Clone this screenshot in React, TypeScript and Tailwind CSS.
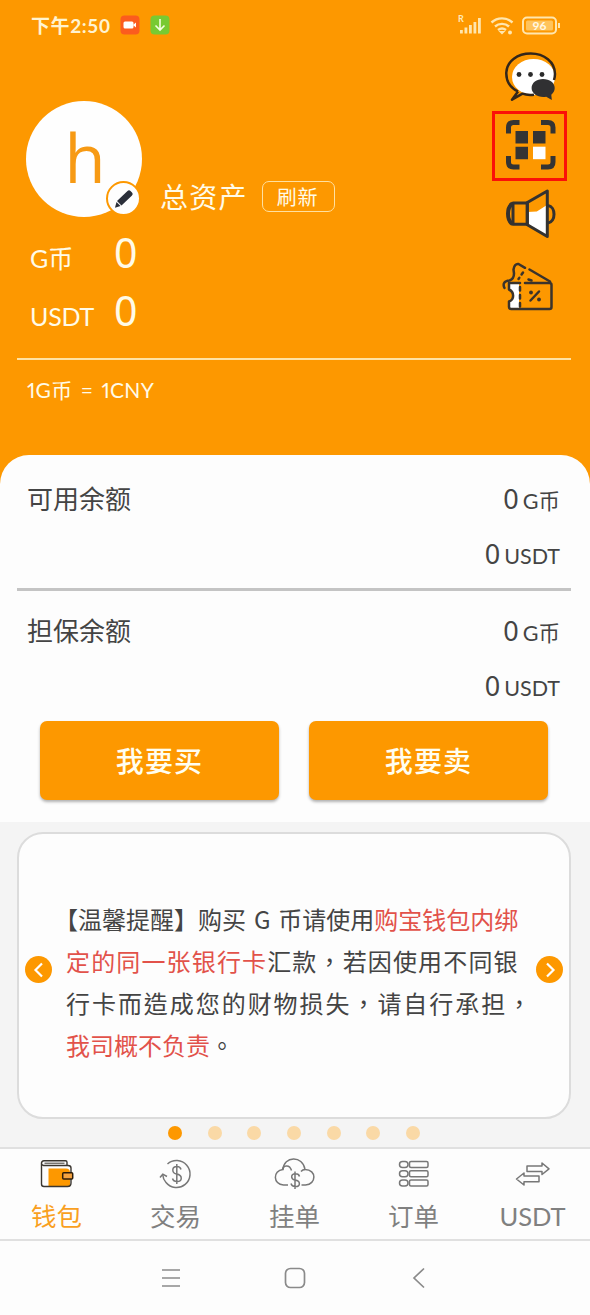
import React from "react";

const NAV_ITEMS = [
  { label: "钱包", icon: <WalletIcon />, active: true },
  { label: "交易", icon: <TradeIcon />, active: false },
  { label: "挂单", icon: <CloudIcon />, active: false },
  { label: "订单", icon: <OrderIcon />, active: false },
  { label: "USDT", icon: <TransferIcon />, active: false },
];

const BALANCES = [
  { name: "可用余额", coin: "0", usdt: "0" },
  { name: "担保余额", coin: "0", usdt: "0" },
];

const SLIDES = [0, 1, 2, 3, 4, 5, 6];

function StatusBar() {
  return (
    <div className="flex h-[50px] items-center justify-between pl-[31px] pr-[28px] text-[#fff3d0]">
      <div className="flex items-center">
        <span className="w-[89px] whitespace-nowrap text-[19px] font-bold leading-none tracking-[0.6px]">
          下午2:50
        </span>
        <svg width="52" height="20" viewBox="0 0 52 20">
          <rect x="0.5" y="0.5" width="19" height="19" rx="4" fill="#fb5c1e" />
          <rect x="3.5" y="6.5" width="10" height="7" rx="1.5" fill="#fff" />
          <path d="M13 10l3-2.5v5z" fill="#fff" />
          <rect x="30.5" y="0.5" width="19" height="19" rx="4" fill="#78ca32" />
          <path d="M40 4v11M35.500 10.500l4.500 4.500 4.500-4.500" fill="none" stroke="#f4ffe0" strokeWidth="1.600" />
        </svg>
      </div>
      <svg width="104" height="22" viewBox="0 0 104 22">
        <text x="0" y="8" fontSize="9" fontWeight="bold" fill="#ffe9b8" fontFamily="Lato">R</text>
        <g fill="#ffe6ae">
          <rect x="2" y="16" width="2.800" height="3.500" />
          <rect x="6.500" y="13.500" width="2.800" height="6" />
          <rect x="11" y="11" width="2.800" height="8.500" />
          <rect x="15.500" y="8" width="2.800" height="11.500" />
          <rect x="20" y="4" width="2.800" height="15.500" />
        </g>
        <g fill="none" stroke="#ffe6ae" strokeWidth="2.400">
          <path d="M33.500 8.500c6-5.500 15-5.500 21 0" />
          <path d="M37 12.500c4-3.500 10-3.500 14 0" />
          <path d="M40 16c2.500-2 5.500-2 8 0" />
        </g>
        <path d="M40.500 17h7l-3.500 3.500z" fill="#ffe6ae" />
        <circle cx="52" cy="18.500" r="2" fill="#ffe6ae" />
        <rect x="65" y="3.500" width="33" height="16" rx="4" fill="none" stroke="#ffe6ae" strokeWidth="2" />
        <rect x="68" y="6.500" width="27" height="10" rx="1.500" fill="#ffc45c" />
        <path d="M101 9v5" stroke="#ffe6ae" strokeWidth="2" />
        <text x="81.500" y="15.500" textAnchor="middle" fontSize="12" fontWeight="bold" fill="#fff8e4" fontFamily="Lato">96</text>
      </svg>
    </div>
  );
}

function ChatIcon() {
  return (
    <svg width="75" height="61" viewBox="0 0 75 61">
      <ellipse cx="41.500" cy="27" rx="21.500" ry="18" fill="#fff" />
      <path
        d="M26 41.500C18 37.500 14 30.500 14.300 22.500 15 11 25.500 3.500 38.700 3.500c13.500 0 24.300 8.500 24.300 20.500 0 2.500-.4 4-1 6M26 41.500l-6 8.200 10.500-6c3.500 1.300 7 1.500 11.500 1"
        fill="none"
        stroke="#33261a"
        strokeWidth="2.500"
        strokeLinejoin="round"
      />
      <g fill="#2b2b2b">
        <circle cx="27" cy="24.500" r="2.400" />
        <circle cx="38.500" cy="24.500" r="2.400" />
        <circle cx="50" cy="24.500" r="2.400" />
      </g>
      <path
        d="M51 29c6.600 0 11.700 3.800 11.700 9 0 2.800-1.300 5-3.400 6.700l.5 5.200-5.600-3.200c-7.500 1.400-14.600-2.700-14.600-8.700 0-5.200 5-9 11.400-9z"
        fill="#303032"
      />
    </svg>
  );
}

function ScanIcon() {
  return (
    <svg width="69" height="64" viewBox="3 3 69 64">
      <path
        d="M16.500 22.500V16.500q0-5 5-5h6M49 11.500h7q5 0 5 5v6M61 45v6q0 5-5 5h-7M27.500 56h-6q-5 0-5-5v-6"
        fill="none"
        stroke="#343434"
        strokeWidth="5"
      />
      <path d="M23.500 20h12.500v12.500H23.500zM41 20h12.500v12.500H41zM23.500 35.700h12.500v12.500H23.500z" fill="#343434" />
      <path d="M41 35.700h12.500v12.500H41z" fill="#fff" />
    </svg>
  );
}

function MegaphoneIcon() {
  return (
    <svg width="75" height="64" viewBox="0 0 75 64">
      <path d="M35.300 31l9.500-.5L55 24v31L35.300 43z" fill="#fff" />
      <g fill="none" stroke="#343230" strokeWidth="3" strokeLinejoin="round">
        <path d="M21 22h14.300v21.200H21z" />
        <path d="M35.300 21.500L55.300 10v45.500L35.300 43.700z" />
        <path d="M20.500 22.500c-6 4-6 16.500 0 20.500" strokeWidth="4" />
        <path d="M56 24.500c8 1 8 16.500 0 17.500" />
      </g>
    </svg>
  );
}

function TicketIcon() {
  return (
    <svg width="75" height="80" viewBox="0 0 75 80">
      <path d="M17 38h10v26H17v-7.500c5.500-2 5.500-9.500 0-12z" fill="#fff" />
      <g fill="none" stroke="#3a332c" strokeWidth="2.500" strokeLinejoin="round" strokeLinecap="round">
        <path d="M28 38H17v6.500c5.500 2.500 5.500 10 0 12V62q0 2 2 2h38.500q2 0 2-2V40q0-2-2-2H33" />
        <path d="M12.500 43c-2-4-.5-7 5-7.500 3-1 4.500-3.500 4.500-7l-.5-4c.5-4 2.500-6 5-5.500l6.500 3.800M37.500 24.500L58 36.500" />
        <path d="M28 42v21" strokeDasharray="3.500 4.500" />
        <path d="M31 27.500l-4.500 6.500" strokeDasharray="2.500 4" />
        <path d="M36.500 34.500l3 1" />
        <path d="M47 46.500l-8.500 9" />
      </g>
      <circle cx="39" cy="47.500" r="1.900" fill="#3a332c" />
      <circle cx="47" cy="54.500" r="1.900" fill="#3a332c" />
    </svg>
  );
}

function PencilIcon() {
  return (
    <svg width="22" height="22" viewBox="0 0 22 22">
      <path d="M14.500 3q1.500-1.500 3 0l1.500 1.500q1.500 1.500 0 3L8.500 17.500 4 13z" fill="#2b2f3a" />
      <path d="M3.500 14l4 4-5.500 1.800z" fill="#2b2f3a" />
    </svg>
  );
}

function WalletIcon() {
  return (
    <svg width="34" height="28" viewBox="0 0 34 28">
      <path d="M8.500 8.500H26q4 0 4 4v14H8.500z" fill="#fd9800" />
      <g fill="none" stroke="#3b3630" strokeWidth="1.400">
        <path d="M1.500 2.500V24q0 2.500 2.500 2.500h23.500q3.500 0 3.500-3.500V8q0-2.500-3-2.500H3.500q-2-.3-2-2 0-2.800 2.500-2.800h21.500q1.500 0 1.500 1.500v3" />
        <path d="M4.500 3.200h20" strokeWidth="1" />
      </g>
      <rect x="22.700" y="12.700" width="10" height="6.300" rx="1" fill="#f5a340" stroke="#2e1d08" strokeWidth="1.500" />
    </svg>
  );
}

function TradeIcon() {
  return (
    <svg width="34" height="32" viewBox="0 0 34 32">
      <g fill="none" stroke="#777" strokeWidth="1.500">
        <path d="M8.500 6A13.500 13.500 0 1 1 7 24.500C5 22.500 4 20 3.800 17" />
        <path d="M1 19.500l2.800-3.300L8 18.500" />
        <path d="M22 11.500c-.5-2-2-3-4-3-5.500 0-5.500 6.500-.5 7.500 6.500 1 6 7.500.5 7.500-2.500 0-4-1-4.500-3M17.800 6v20" />
      </g>
    </svg>
  );
}

function CloudIcon() {
  return (
    <svg width="42" height="32" viewBox="0 0 42 32">
      <g fill="none" stroke="#777" strokeWidth="1.500">
        <path d="M14 27H9.500C-1 26.500-1.500 12.500 9 11.500 9.500-2 29-3 31 11.500c12 0 11.500 15 .5 15.500h-4" />
        <path d="M8.500 12c0-4.500 7-6.500 9 .5" />
        <path d="M31 11.500c-2 0-3 .8-4 2" />
        <path d="M25.500 18.500c-.5-2-2-2.700-4-2.700-5 0-5 5.400-.5 6.200 6 1 5.500 6.500.5 6.500-2.500 0-4-1-4.500-3M21 13.500v17.500" />
      </g>
    </svg>
  );
}

function OrderIcon() {
  return (
    <svg width="32" height="28" viewBox="0 0 32 28">
      <g fill="none" stroke="#777" strokeWidth="1.500">
        <rect x="1.500" y="1.500" width="8.500" height="6" rx="3" />
        <rect x="11.500" y="1.500" width="18.500" height="6" rx="1.500" />
        <rect x="1.500" y="10.800" width="8.500" height="6" rx="3" />
        <rect x="11.500" y="10.800" width="18.500" height="6" rx="1.500" />
        <rect x="1.500" y="20.100" width="8.500" height="6" rx="3" />
        <rect x="11.500" y="20.100" width="18.500" height="6" rx="1.500" />
      </g>
    </svg>
  );
}

function TransferIcon() {
  return (
    <svg width="36" height="26" viewBox="0 0 36 26">
      <g fill="none" stroke="#777" strokeWidth="1.500" strokeLinejoin="round">
        <path d="M12 5h15V2L34 7.800l-7 5.700V10.500H12z" />
        <path d="M24 15H9v-3l-7.500 6L9 24v-3.300h15z" />
      </g>
    </svg>
  );
}

function WalletHeader() {
  return (
    <header className="h-[490px] bg-[#fd9800] text-[#fffbe8]">
      <StatusBar />
      <div className="flex h-[308px] justify-between pl-[26px] pr-[23px]">
        <div className="pt-[51px]">
          <div className="flex items-end">
            <div className="relative flex h-[116px] w-[116px] items-center justify-center rounded-full bg-[#fefefe]">
              <span className="pb-[4px] pl-[2px] font-['Open_Sans',sans-serif] text-[67px] leading-none text-[#f79a14]">h</span>
              <span className="absolute right-[1px] bottom-[1px] flex h-[35px] w-[35px] items-center justify-center rounded-full border-2 border-[#fd9800] bg-[#fefefe]">
                <PencilIcon />
              </span>
            </div>
            <div className="ml-[18px] h-[40px] w-[102px] text-[28px] leading-[40px] tracking-[1.200px]">总资产</div>
            <button className="mb-[5px] h-[31px] w-[73px] rounded-[7px] border border-[#ffe0a0] pr-[2px] text-[20px] leading-[30px] tracking-[0.8px]">
              刷新
            </button>
          </div>
          <div className="mt-[6px] flex h-[58px] items-baseline pl-[4px]">
            <span className="w-[84px] text-[25px]">G币</span>
            <span className="font-['Noto_Sans',sans-serif] text-[41px] leading-[58px]">0</span>
          </div>
          <div className="flex h-[58px] items-baseline pl-[4px]">
            <span className="w-[84px] text-[25px] tracking-[-0.2px]">USDT</span>
            <span className="font-['Noto_Sans',sans-serif] text-[41px] leading-[58px]">0</span>
          </div>
        </div>
        <div className="flex w-[75px] flex-col">
          <ChatIcon />
          <div className="h-[70px] border-3 border-[#fb1008]">
            <ScanIcon />
          </div>
          <MegaphoneIcon />
          <TicketIcon />
        </div>
      </div>
      <div className="ml-[17px] mr-[19px] h-[2px] bg-[#ffe2a3]" />
      <p className="px-[27px] pt-[15px] text-[21px] leading-[30px] proportional-nums tracking-[0.3px] [word-spacing:2.500px]">
        1G币 = 1CNY
      </p>
    </header>
  );
}

function NoticeCard() {
  return (
    <section className="h-[325px] bg-[#f4f4f4] pl-[17px] pr-[19px] pt-[10px]">
      <div className="flex h-[287px] items-center justify-between rounded-[26px] border-2 border-[#dcdcdc] bg-[#fdfdfd] px-[6px]">
        <button className="mt-[-12px] flex h-[27px] w-[27px] shrink-0 items-center justify-center rounded-full bg-[#fd9800]">
          <svg width="12" height="18" viewBox="0 0 12 18">
            <path d="M9 2.500L2.500 9 9 15.500" fill="none" stroke="#fff" strokeWidth="2.200" />
          </svg>
        </button>
        <div className="ml-[1px] mt-[26px] h-[182px] w-[457px] whitespace-nowrap font-['Noto_Sans_CJK_TC',sans-serif] text-[24px] leading-[42px] text-[#444]">
          <p className="-ml-[12px] [word-spacing:2.500px]">
            【温馨提醒】购买 G 币请使用<span className="text-[#e2524a]">购宝钱包内绑</span>
          </p>
          <p className="tracking-[1.150px]">
            <span className="text-[#e2524a]">定的同一张银行卡</span>汇款，若因使用不同银
          </p>
          <p className="tracking-[1.950px]">行卡而造成您的财物损失，请自行承担，</p>
          <p>
            <span className="text-[#e2524a]">我司概不负责</span>。
          </p>
        </div>
        <button className="mt-[-12px] flex h-[27px] w-[27px] shrink-0 items-center justify-center rounded-full bg-[#fd9800]">
          <svg width="12" height="18" viewBox="0 0 12 18">
            <path d="M3 2.500L9.500 9 3 15.500" fill="none" stroke="#fff" strokeWidth="2.200" />
          </svg>
        </button>
      </div>
      <div className="flex justify-center gap-[25.700px] pt-[7px]">
        {SLIDES.map((slide) => (
          <span
            key={slide}
            className={
              slide === 0
                ? "h-[14px] w-[14px] rounded-full bg-[#fd9800]"
                : "h-[14px] w-[14px] rounded-full bg-[#fad9a6]"
            }
          />
        ))}
      </div>
    </section>
  );
}

const App: React.FC = () => {
  return (
    <div className="h-[1315px] w-[590px] overflow-hidden bg-[#fdfdfd] font-['Lato','Noto_Sans_CJK_TC',sans-serif]">
      <WalletHeader />

      <main className="relative -mt-[35px] h-[367px] rounded-t-[29px] bg-[#fdfdfd] pl-[17px] pr-[19px] text-[#444]">
        {BALANCES.map((balance, index) => (
          <div
            key={balance.name}
            className={
              index === 0
                ? "h-[136px] border-b-3 border-[#c4c4c4] pl-[10px] pr-[11px] pt-[16px]"
                : "h-[130px] pl-[10px] pr-[11px] pt-[12px]"
            }
          >
            <div className="flex h-[55px] items-baseline justify-between leading-[54px]">
              <span className="font-['Noto_Sans_CJK_SC',sans-serif] text-[26px]">{balance.name}</span>
              <span className="text-[21.500px]">
                <span className="mr-[4px] font-['Noto_Sans',sans-serif] text-[27px]">{balance.coin}</span>G币
              </span>
            </div>
            <div className="text-right text-[21.500px] leading-[55px]">
              <span className="mr-[4px] font-['Noto_Sans',sans-serif] text-[27px]">{balance.usdt}</span>USDT
            </div>
          </div>
        ))}
        <div className="flex gap-[30px] px-[23px]">
          <button className="h-[79px] w-[239px] shrink-0 rounded-[7px] bg-[#fd9800] text-[28px] font-medium tracking-[1.200px] text-[#fffef0] shadow-[0_2px_3px_rgba(0,0,0,0.3)]">
            我要买
          </button>
          <button className="h-[79px] w-[239px] shrink-0 rounded-[7px] bg-[#fd9800] text-[28px] font-medium tracking-[1.200px] text-[#fffef0] shadow-[0_2px_3px_rgba(0,0,0,0.3)]">
            我要卖
          </button>
        </div>
      </main>

      <NoticeCard />

      <nav className="h-[94px] border-y-2 border-[#e0e0e0]">
        <div className="-ml-[3px] flex w-[595px]">
          {NAV_ITEMS.map((item) => (
            <div key={item.label} className="flex w-[119px] flex-col items-center">
              <span className="flex h-[49px] items-center">{item.icon}</span>
              <span
                className={
                  item.active
                    ? "text-[25.500px] leading-[36px] text-[#f9a01f]"
                    : "text-[25.500px] leading-[36px] text-[#808080]"
                }
              >
                {item.label}
              </span>
            </div>
          ))}
        </div>
      </nav>

      {/* android system buttons */}
      <footer className="flex h-[74px] items-center justify-center gap-[103px]">
        <svg width="20" height="20" viewBox="0 0 20 20">
          <path d="M1 2h18M1 10h18M1 18h18" stroke="#8a8a8a" strokeWidth="1.600" />
        </svg>
        <svg width="22" height="22" viewBox="0 0 22 22">
          <rect x="1.500" y="1.500" width="19" height="19" rx="5" fill="none" stroke="#8a8a8a" strokeWidth="1.700" />
        </svg>
        <svg width="20" height="22" viewBox="0 0 20 22">
          <path d="M15 1.500L5 11l10 9.500" fill="none" stroke="#8a8a8a" strokeWidth="1.700" />
        </svg>
      </footer>
    </div>
  );
};

export default App;
